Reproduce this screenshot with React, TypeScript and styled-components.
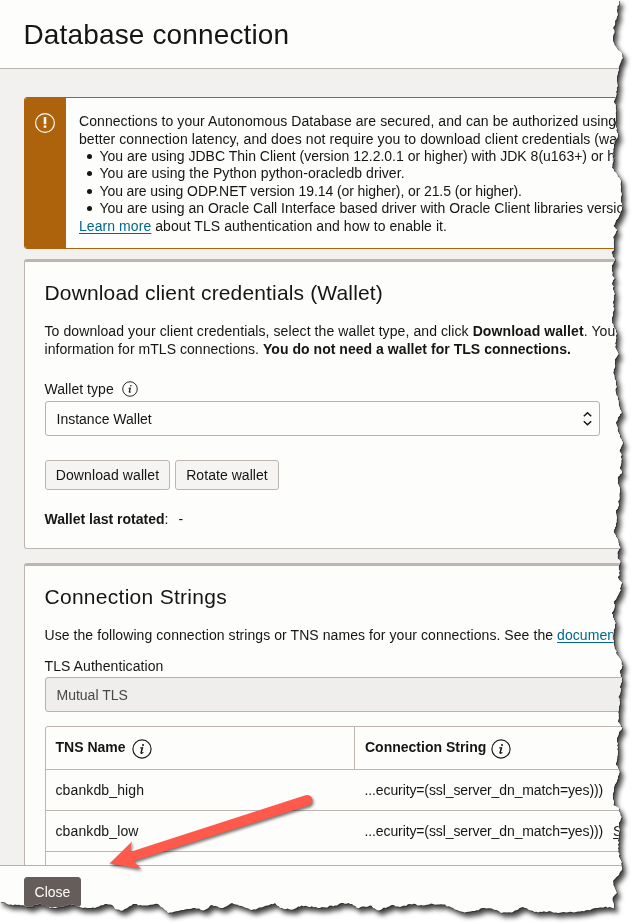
import React from "react";
import styled, { createGlobalStyle } from "styled-components";

const GlobalStyle = createGlobalStyle`
  * { box-sizing: border-box; }
  body { margin: 0; background: #fff; overflow: hidden; }
`;

type Point = [number, number];

const rightEdge: Point[] = [
  [619, 3], [617, 10], [618, 15], [615, 21], [615, 25], [613, 28], [614.5, 33], [613, 37], [614, 43], [617, 48],
  [622, 53], [623, 58], [621, 62], [619, 67], [618, 72], [617, 78], [617, 90], [616, 97], [614, 101], [615.5, 107],
  [616, 115], [614.5, 123], [618, 134], [614.5, 143], [613, 153], [613, 162], [612, 168], [616, 173], [620.5, 180],
  [621, 192], [621, 200], [622, 208], [618.5, 217], [613, 226], [617, 230], [613, 237], [614, 250], [611.5, 253],
  [615, 260], [612, 265], [612, 275], [614.5, 278], [612, 283], [614, 292], [613, 307], [614, 310], [612, 317],
  [612, 323], [616, 332], [615, 347], [618.5, 354], [615.5, 358], [614.5, 368], [613, 373], [616, 383], [616, 393],
  [618.5, 403], [621.5, 413], [618, 417], [616, 422], [617.5, 430], [622.5, 442], [619.5, 450], [621.5, 455],
  [620, 467], [622, 473], [617.5, 477], [617.5, 483], [620, 490], [618, 507], [616, 510], [616.5, 522], [613.5, 531],
  [615.5, 535], [620.5, 548], [617.5, 552], [617.5, 557], [620.5, 562], [618.5, 567], [619.5, 575], [618, 578],
  [622, 583], [619.5, 592], [616.5, 598], [613.5, 603], [614.5, 607], [611.5, 613], [615.5, 623], [613.5, 630],
  [614, 645], [617, 655], [621.5, 662], [622, 667], [619.5, 672], [621.5, 680], [619.5, 687], [621, 690], [618, 697],
  [620, 703], [618, 712], [618, 722], [622, 728], [619, 732], [617, 740], [618, 753], [616, 765], [619, 770],
  [618, 778], [614, 787], [613, 797], [614, 802], [613, 805], [618.5, 808], [621.5, 817], [618.5, 823], [619.5, 830],
  [618.5, 837], [618, 852], [621.5, 862], [622, 870], [619, 875], [613, 881], [614.5, 887], [617, 893], [613, 897],
  [614, 907], [615, 910],
];

const bottomEdge: Point[] = [
  [609.5, 907], [596, 908], [588, 910], [576, 912], [558, 913], [549.5, 911], [534.5, 912], [523, 907], [511, 912.5],
  [501, 913], [496, 910], [484.5, 908], [474.5, 911], [464.5, 912.5], [453, 908], [443, 904.5], [433, 904],
  [423, 905.5], [410, 904], [400, 907], [391.5, 905], [378, 910.5], [370, 905.5], [357, 908], [352, 904], [343, 903],
  [335, 905.5], [320, 908], [301.5, 905.5], [293, 909.5], [280, 908], [275, 903], [263, 907], [252, 910], [232, 903],
  [223, 908], [212, 905], [203, 910.5], [195, 908], [180, 910.5], [168, 913], [158, 904], [142, 905.5], [133, 904],
  [123, 910.5], [115, 909], [112, 905], [105, 904], [97, 907], [83, 908], [70, 904], [63, 907], [50, 908], [40, 903],
  [30, 907], [17, 905], [7, 904], [3, 902],
];

/* Subdivides an outline and roughens it so that it reads as torn paper. */
function roughen(points: Point[], axis: 0 | 1): Point[] {
  const out: Point[] = [];
  for (let i = 0; i < points.length - 1; i++) {
    const [ax, ay] = points[i];
    const [bx, by] = points[i + 1];
    const steps = Math.max(1, Math.round(Math.hypot(bx - ax, by - ay) / 2));
    for (let s = 0; s < steps; s++) {
      const t = s / steps;
      const n = Math.sin((i * 7 + s) * 12.9898) * 43758.5453;
      const jitter = s === 0 ? 0 : (n - Math.floor(n) - 0.5) * 1.5;
      const p: Point = [ax + (bx - ax) * t, ay + (by - ay) * t];
      p[axis] += jitter;
      out.push(p);
    }
  }
  return out;
}

const outline = ([[0, 0], [619, 0]] as Point[])
  .concat(roughen(rightEdge, 0), roughen(bottomEdge, 1), [[3, 902], [0, 902]])
  .map(([x, y]) => `${x.toFixed(1)}px ${y.toFixed(1)}px`)
  .join(",");

const Stage = styled.main`
  position: relative;
  width: 633px;
  height: 924px;
  overflow: hidden;
  background: #fff;
`;

const PaperShadow = styled.div`
  filter: drop-shadow(1px 1px 0.5px rgba(40, 40, 40, 0.6)) drop-shadow(3px 4px 2.5px rgba(0, 0, 0, 0.75));
`;

const Paper = styled.div`
  display: flex;
  flex-direction: column;
  width: 633px;
  height: 924px;
  overflow: hidden;
  background: #fdfdfc;
  clip-path: polygon(${outline});
  font-family: "Liberation Sans", Arial, sans-serif;
  font-size: 14px;
  line-height: 17.5px;
  color: #161513;
  white-space: nowrap;
`;

const Header = styled.header`
  flex: none;
  height: 69px;
  padding: 18px 24px 0 23.5px;
  border-bottom: 1px solid #bdb6b0;
`;

const Title = styled.h1`
  margin: 0;
  font-size: 28px;
  line-height: 34px;
  font-weight: 400;
  letter-spacing: 0.14px;
`;

const Body = styled.div`
  flex: none;
  height: 796px;
  width: 1000px;
  overflow: hidden;
  padding: 28px 24px 0;
  background: #f3f1f0;
`;

const Alert = styled.section`
  display: flex;
  height: 152px;
  border: 1px solid #ac630c;
  border-radius: 3px;
  background: #fdfdfc;
  overflow: hidden;
`;

const AlertStripe = styled.div`
  flex: none;
  width: 41px;
  padding: 15px 0 0 10px;
  background: #ac630c;
  svg { display: block; }
`;

const AlertText = styled.div`
  padding: 14.5px 0 0 13.5px;
`;

const Bullets = styled.ul`
  margin: -0.5px 0 0;
  padding: 0;
  list-style: none;
`;

const Bullet = styled.li`
  display: flex;
  align-items: center;
  gap: 7px;
  padding-left: 7px;
  &::before {
    content: "";
    width: 5px;
    height: 5px;
    margin-right: 1px;
    border-radius: 50%;
    background: #161513;
  }
`;

const Line = styled.span<{ $track?: number }>`
  letter-spacing: ${(p) => p.$track ?? 0}px;
`;

const Link = styled.a<{ $plain?: boolean }>`
  color: ${(p) => (p.$plain ? "#161513" : "#00688c")};
  text-decoration: underline;
  text-underline-offset: 2px;
`;

const Card = styled.section<{ $gap: number; $height: number }>`
  height: ${(p) => p.$height}px;
  margin-top: ${(p) => p.$gap}px;
  padding: 18px 0 0 20px;
  border: 1px solid #bdb6b0;
  border-top-width: 3px;
  border-radius: 3px;
  background: #fdfdfc;
`;

const CardTitle = styled.h2<{ $track: number }>`
  margin: 0 0 17px -0.5px;
  font-size: 21px;
  line-height: 26px;
  font-weight: 400;
  letter-spacing: ${(p) => p.$track}px;
`;

const Paragraph = styled.p<{ $leading?: number }>`
  margin: 0 0 0 -0.5px;
  line-height: ${(p) => p.$leading ?? 17.5}px;
`;

const Label = styled.div<{ $top: number }>`
  display: flex;
  align-items: center;
  gap: 8px;
  height: 18px;
  margin: ${(p) => p.$top}px 0 0 -0.5px;
  svg { margin-top: -2px; }
`;

const Select = styled.div<{ $width: number; $disabled?: boolean; $top: number }>`
  display: flex;
  align-items: center;
  justify-content: space-between;
  width: ${(p) => p.$width}px;
  height: 35px;
  margin-top: ${(p) => p.$top}px;
  padding: ${(p) => (p.$disabled ? 3 : 2)}px 7px 0 10.5px;
  border: 1px solid #b9b2ac;
  border-radius: 3px;
  background: ${(p) => (p.$disabled ? "#f0eeed" : "#fdfdfc")};
  color: ${(p) => (p.$disabled ? "#494744" : "#161513")};
  svg { margin-top: -1px; }
`;

const ButtonRow = styled.div`
  display: flex;
  gap: 5px;
  margin-top: 24px;
`;

const Button = styled.button<{ $width: number; $primary?: boolean }>`
  width: ${(p) => p.$width}px;
  height: 30px;
  padding: 2px 0 0;
  border: 1px solid ${(p) => (p.$primary ? "#655d59" : "#bdb6b0")};
  border-radius: 3px;
  background: ${(p) => (p.$primary ? "#655d59" : "#f6f4f3")};
  color: ${(p) => (p.$primary ? "#fdfdfc" : "#161513")};
  font: inherit;
`;

const Rotated = styled.p`
  margin: 21px 0 0 -0.5px;
  display: flex;
  gap: 10px;
`;

const Table = styled.div`
  width: 900px;
  margin-top: 14px;
  border: 1px solid #bdb6b0;
  border-radius: 3px 3px 0 0;
`;

const Row = styled.div<{ $height: number }>`
  display: grid;
  grid-template-columns: 309px 1fr;
  height: ${(p) => p.$height}px;
  border-bottom: 1px solid #bdb6b0;
`;

const HeadCell = styled.div<{ $divided?: boolean }>`
  display: flex;
  align-items: center;
  gap: ${(p) => (p.$divided ? 6 : 5)}px;
  padding-left: ${(p) => (p.$divided ? 9.5 : 10)}px;
  border-right: ${(p) => (p.$divided ? "1px solid #bdb6b0" : "none")};
  font-weight: 700;
  svg { margin-top: 2px; }
`;

const Cell = styled.div`
  display: flex;
  align-items: center;
  gap: 10px;
  padding: 2px 0 0 9.5px;
`;

const Footer = styled.footer`
  flex: 1;
  padding: 11px 24px 0;
  border-top: 1px solid #b5b1ad;
`;

const ArrowLayer = styled.svg`
  position: absolute;
  left: 0;
  top: 780px;
  pointer-events: none;
  filter: drop-shadow(1.5px 2.5px 1.5px rgba(0, 0, 0, 0.55));
`;

function InfoIcon({ size }: { size: number }) {
  return (
    <svg width={size} height={size} viewBox="0 0 20 20" fill="none" stroke="#161513">
      <circle cx="10" cy="10" r="9.1" strokeWidth="1.15" />
      <circle cx="11" cy="6" r="1" fill="#161513" stroke="none" />
      <path d="M8.1 9.1 10.6 8.6 9.1 13.8Q9 14.9 9.9 14.4L11.4 13.2" strokeWidth="1.05" />
      <path d="M10.3 8.8 8.9 13.9" strokeWidth="1.2" />
    </svg>
  );
}

function WarningIcon() {
  return (
    <svg width="20" height="20" viewBox="0 0 20 20" fill="none">
      <circle cx="10" cy="10" r="9.4" stroke="#fdfdfc" strokeWidth="1.2" />
      <path d="M8.7 4h2.6v7.2H8.7zM8.7 12.6h2.6v2.2H8.7z" fill="#fdfdfc" />
    </svg>
  );
}

function SelectArrows() {
  return (
    <svg width="9" height="16" viewBox="0 0 9 16" fill="none" stroke="#161513" strokeWidth="1.5">
      <path d="M0.8 5.2 4.5 1.7 8.2 5.2M0.8 10.3 4.5 13.8 8.2 10.3" />
    </svg>
  );
}

const names = ["cbankdb_high", "cbankdb_low", "cbankdb_medium"];

export default function App() {
  return (
    <Stage>
      <GlobalStyle />
      <PaperShadow>
        <Paper>
          <Header>
            <Title>Database connection</Title>
          </Header>
          <Body>
            <Alert>
              <AlertStripe><WarningIcon /></AlertStripe>
              <AlertText>
                <Paragraph $leading={17.5}><Line $track={0.07}>Connections to your Autonomous Database are secured, and can be authorized using</Line></Paragraph>
                <Paragraph $leading={18}><Line $track={0.08}>better connection latency, and does not require you to download client credentials (wallet)</Line></Paragraph>
                <Bullets>
                  <Bullet><Line>You are using JDBC Thin Client (version 12.2.0.1 or higher) with JDK 8(u163+) or higher.</Line></Bullet>
                  <Bullet><Line $track={0.06}>You are using the Python python-oracledb driver.</Line></Bullet>
                  <Bullet><Line $track={-0.1}>You are using ODP.NET version 19.14 (or higher), or 21.5 (or higher).</Line></Bullet>
                  <Bullet><Line>You are using an Oracle Call Interface based driver with Oracle Client libraries version</Line></Bullet>
                </Bullets>
                <Paragraph><Line $track={0.07}><Link>Learn more</Link> about TLS authentication and how to enable it.</Line></Paragraph>
              </AlertText>
            </Alert>

            <Card $gap={10} $height={290}>
              <CardTitle $track={0.15}>Download client credentials (Wallet)</CardTitle>
              <Paragraph><Line $track={0.09}>To download your client credentials, select the wallet type, and click <b>Download wallet</b>. You</Line></Paragraph>
              <Paragraph><Line $track={0.04}>information for mTLS connections. <b>You do not need a wallet for TLS connections.</b></Line></Paragraph>
              <Label $top={23}><Line $track={0.05}>Wallet type</Line><InfoIcon size={16} /></Label>
              <Select $width={555} $top={2}><Line>Instance Wallet</Line><SelectArrows /></Select>
              <ButtonRow>
                <Button $width={125}><Line $track={0.1}>Download wallet</Line></Button>
                <Button $width={104}><Line $track={0.05}>Rotate wallet</Line></Button>
              </ButtonRow>
              <Rotated><span><b>Wallet last rotated</b>:</span><span>-</span></Rotated>
            </Card>

            <Card $gap={14} $height={600}>
              <CardTitle $track={0.28}>Connection Strings</CardTitle>
              <Paragraph><Line $track={0.068}>Use the following connection strings or TNS names for your connections. See the <Link>documentation</Link></Line></Paragraph>
              <Label $top={13}><Line $track={0.08}>TLS Authentication</Line></Label>
              <Select $width={900} $top={1} $disabled><Line>Mutual TLS</Line></Select>
              <Table>
                <Row $height={43}>
                  <HeadCell $divided>TNS Name<InfoIcon size={20} /></HeadCell>
                  <HeadCell><Line>Connection String</Line><InfoIcon size={20} /></HeadCell>
                </Row>
                {names.map((name) => (
                  <Row key={name} $height={41}>
                    <Cell><Line $track={0.12}>{name}</Line></Cell>
                    <Cell><Line $track={-0.11}>...ecurity=(ssl_server_dn_match=yes)))</Line><Link $plain>Show</Link></Cell>
                  </Row>
                ))}
              </Table>
            </Card>
          </Body>
          <Footer>
            <Button $width={57} $primary>Close</Button>
          </Footer>
        </Paper>
      </PaperShadow>
      <ArrowLayer width="340" height="110" viewBox="0 780 340 110">
        <path d="M109.5 863.5 132 841.5 130 852 305.5 795.2A5.2 5.2 0 0 1 309 805.2L133.5 861 141 868.7Z" fill="#ff594c" />
      </ArrowLayer>
    </Stage>
  );
}
